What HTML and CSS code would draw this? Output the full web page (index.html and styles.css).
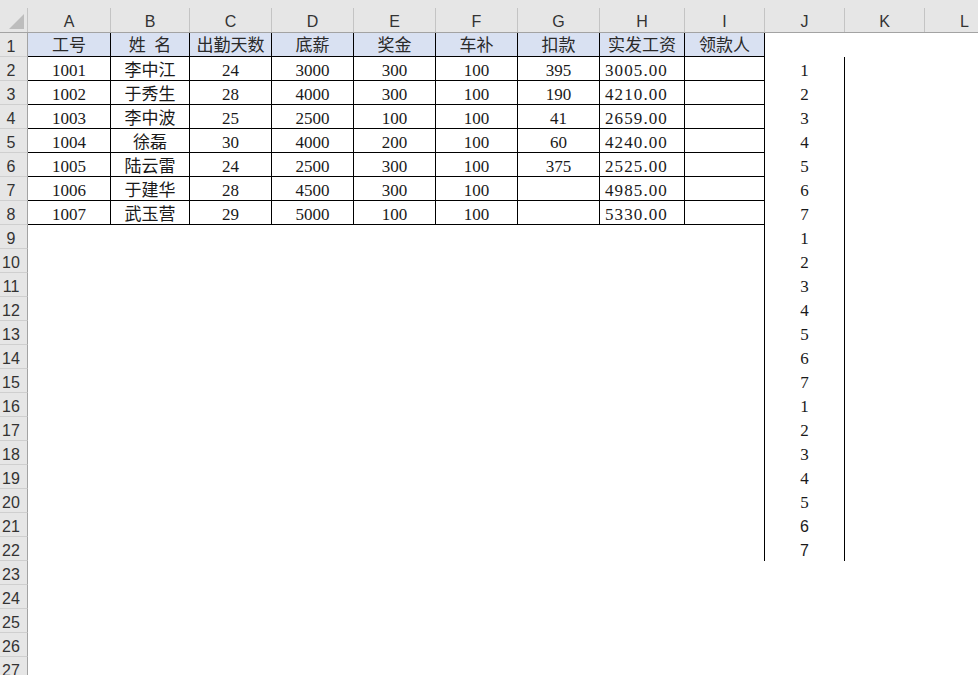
FILE: index.html
```html
<!DOCTYPE html>
<html lang="zh">
<head>
<meta charset="utf-8">
<title>工资表</title>
<link rel="stylesheet" href="styles.css">
</head>
<body>
<div class="sheet">
  <div class="colhead">
    <div class="corner"><span class="tri"></span></div>
    <div class="ch">A</div><div class="ch">B</div><div class="ch">C</div><div class="ch">D</div>
    <div class="ch">E</div><div class="ch">F</div><div class="ch">G</div><div class="ch">H</div>
    <div class="ch">I</div><div class="ch">J</div><div class="ch">K</div><div class="ch">L</div>
  </div>

  <div class="row">
    <div class="rh">1</div>
    <div class="c hd">工号</div><div class="c hd">姓&nbsp;&nbsp;名</div><div class="c hd">出勤天数</div><div class="c hd">底薪</div>
    <div class="c hd">奖金</div><div class="c hd">车补</div><div class="c hd">扣款</div><div class="c hd">实发工资</div><div class="c hd">领款人</div>
  </div>
  <div class="row">
    <div class="rh">2</div>
    <div class="c">1001</div><div class="c">李中江</div><div class="c">24</div><div class="c">3000</div>
    <div class="c">300</div><div class="c">100</div><div class="c">395</div><div class="c l">3005.00</div><div class="c"></div>
    <div class="j">1</div>
  </div>
  <div class="row">
    <div class="rh">3</div>
    <div class="c">1002</div><div class="c">于秀生</div><div class="c">28</div><div class="c">4000</div>
    <div class="c">300</div><div class="c">100</div><div class="c">190</div><div class="c l">4210.00</div><div class="c"></div>
    <div class="j">2</div>
  </div>
  <div class="row">
    <div class="rh">4</div>
    <div class="c">1003</div><div class="c">李中波</div><div class="c">25</div><div class="c">2500</div>
    <div class="c">100</div><div class="c">100</div><div class="c">41</div><div class="c l">2659.00</div><div class="c"></div>
    <div class="j">3</div>
  </div>
  <div class="row">
    <div class="rh">5</div>
    <div class="c">1004</div><div class="c">徐磊</div><div class="c">30</div><div class="c">4000</div>
    <div class="c">200</div><div class="c">100</div><div class="c">60</div><div class="c l">4240.00</div><div class="c"></div>
    <div class="j">4</div>
  </div>
  <div class="row">
    <div class="rh">6</div>
    <div class="c">1005</div><div class="c">陆云雷</div><div class="c">24</div><div class="c">2500</div>
    <div class="c">300</div><div class="c">100</div><div class="c">375</div><div class="c l">2525.00</div><div class="c"></div>
    <div class="j">5</div>
  </div>
  <div class="row">
    <div class="rh">7</div>
    <div class="c">1006</div><div class="c">于建华</div><div class="c">28</div><div class="c">4500</div>
    <div class="c">300</div><div class="c">100</div><div class="c"></div><div class="c l">4985.00</div><div class="c"></div>
    <div class="j">6</div>
  </div>
  <div class="row">
    <div class="rh">8</div>
    <div class="c">1007</div><div class="c">武玉营</div><div class="c">29</div><div class="c">5000</div>
    <div class="c">100</div><div class="c">100</div><div class="c"></div><div class="c l">5330.00</div><div class="c"></div>
    <div class="j">7</div>
  </div>

  <div class="row"><div class="rh">9</div><div class="blank"></div><div class="edge"></div><div class="j">1</div></div>
  <div class="row"><div class="rh">10</div><div class="blank"></div><div class="edge"></div><div class="j">2</div></div>
  <div class="row"><div class="rh">11</div><div class="blank"></div><div class="edge"></div><div class="j">3</div></div>
  <div class="row"><div class="rh">12</div><div class="blank"></div><div class="edge"></div><div class="j">4</div></div>
  <div class="row"><div class="rh">13</div><div class="blank"></div><div class="edge"></div><div class="j">5</div></div>
  <div class="row"><div class="rh">14</div><div class="blank"></div><div class="edge"></div><div class="j">6</div></div>
  <div class="row"><div class="rh">15</div><div class="blank"></div><div class="edge"></div><div class="j">7</div></div>
  <div class="row"><div class="rh">16</div><div class="blank"></div><div class="edge"></div><div class="j">1</div></div>
  <div class="row"><div class="rh">17</div><div class="blank"></div><div class="edge"></div><div class="j">2</div></div>
  <div class="row"><div class="rh">18</div><div class="blank"></div><div class="edge"></div><div class="j">3</div></div>
  <div class="row"><div class="rh">19</div><div class="blank"></div><div class="edge"></div><div class="j">4</div></div>
  <div class="row"><div class="rh">20</div><div class="blank"></div><div class="edge"></div><div class="j">5</div></div>
  <div class="row"><div class="rh">21</div><div class="blank"></div><div class="edge"></div><div class="j sans">6</div></div>
  <div class="row"><div class="rh">22</div><div class="blank"></div><div class="edge"></div><div class="j sans">7</div></div>
  <div class="row"><div class="rh">23</div></div>
  <div class="row"><div class="rh">24</div></div>
  <div class="row"><div class="rh">25</div></div>
  <div class="row"><div class="rh">26</div></div>
  <div class="row"><div class="rh">27</div></div>
</div>
</body>
</html>
```

FILE: styles.css
```css
* {
  box-sizing: border-box;
}

html, body {
  margin: 0;
  padding: 0;
  background: #ffffff;
  overflow: hidden;
}

.sheet {
  --cols: 28px 83px 79px 82px 82px 82px 82px 82px 85px 80px 80px 80px 80px;
  width: 1004px;
  font-family: "Liberation Serif", "Noto Sans CJK SC", serif;
}

.colhead {
  display: grid;
  grid-template-columns: var(--cols);
  grid-template-rows: 24px;
  height: 33px;
  padding-top: 8px;
  background: #e6e6e6;
  border-bottom: 1px solid #a3a3a3;
}

.corner {
  display: flex;
  justify-content: flex-end;
  align-items: flex-end;
  padding: 0 3px 3px 0;
  border-right: 1px solid #c4c4c4;
}

.tri {
  display: block;
  width: 15px;
  height: 15px;
  background: #bdbdbd;
  clip-path: polygon(100% 0, 100% 100%, 0 100%);
}

.ch {
  border-right: 1px solid #c4c4c4;
  text-align: center;
  font-family: "Liberation Sans", Arial, sans-serif;
  font-size: 16px;
  line-height: 20px;
  padding-top: 4px;
  color: #333333;
}

.row {
  display: grid;
  grid-template-columns: var(--cols);
  grid-template-rows: 24px;
  height: 24px;
}

.rh {
  background: #e6e6e6;
  border-right: 1px solid #a3a3a3;
  border-bottom: 1px solid #cfcfcf;
  font-family: "Liberation Sans", Arial, sans-serif;
  font-size: 16px;
  line-height: 19px;
  padding: 4px 5px 0 0;
  text-align: center;
  color: #333333;
}

.c {
  border-right: 1px solid #000000;
  border-bottom: 1px solid #000000;
  text-align: center;
  font-size: 17px;
  line-height: 19px;
  padding-top: 4px;
  color: #1a1a1a;
  white-space: nowrap;
  overflow: hidden;
}

.c.hd {
  background: #d9e1f2;
  color: #2a2a2a;
  padding-top: 3px;
}

.c.l {
  text-align: left;
  padding-left: 5px;
  letter-spacing: 1.1px;
}

.blank {
  grid-column: span 8;
}

.edge {
  border-right: 1px solid #000000;
}

.j {
  border-right: 1px solid #000000;
  text-align: center;
  font-size: 17px;
  line-height: 19px;
  padding-top: 4px;
  color: #1a1a1a;
}

.j.sans {
  font-family: "Liberation Sans", Arial, sans-serif;
  font-size: 16px;
}
```
